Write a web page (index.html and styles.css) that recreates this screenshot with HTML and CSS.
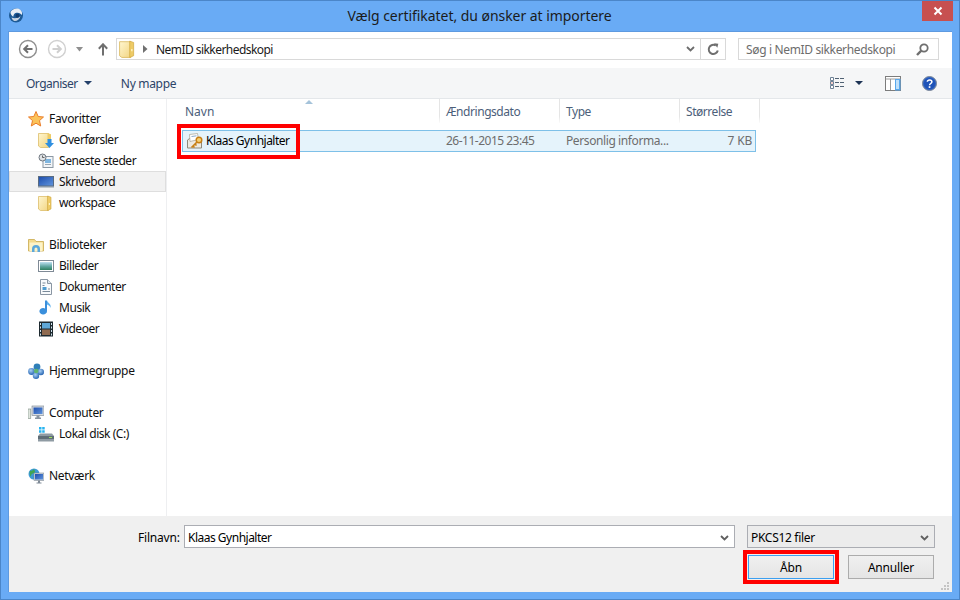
FILE: index.html
```html
<!DOCTYPE html>
<html lang="da">
<head>
<meta charset="utf-8">
<title>Vælg certifikatet</title>
<link rel="stylesheet" href="styles.css">
</head>
<body>
<svg class="sprite" width="0" height="0" aria-hidden="true">
  <defs>
    <linearGradient id="fold" x1="0" y1="0" x2="1" y2="1"><stop offset="0" stop-color="#fff6d0"/><stop offset="1" stop-color="#f2d583"/></linearGradient>
    <linearGradient id="screen" x1="0" y1="0" x2="1" y2="1"><stop offset="0" stop-color="#1f4fae"/><stop offset="1" stop-color="#5f93dc"/></linearGradient>
    <linearGradient id="land" x1="0" y1="0" x2="0" y2="1"><stop offset="0" stop-color="#bfe0f2"/><stop offset=".55" stop-color="#5fa6a0"/><stop offset="1" stop-color="#2f7f60"/></linearGradient>
    <radialGradient id="orb" cx=".4" cy=".35" r=".7"><stop offset="0" stop-color="#a9d0f5"/><stop offset="1" stop-color="#1f5fae"/></radialGradient>
    <symbol id="i-folder" viewBox="0 0 16 16">
      <path d="M0.500 1.500h10v14H2.500L0.500 14z" fill="url(#fold)" stroke="#d9b65a" stroke-width=".7"/>
      <path d="M9.500 1l3.500 1.200V14l-3.500 1.500z" fill="#eecb66" stroke="#cfa53c" stroke-width=".6"/>
      <rect x="10.800" y="8" width="1.200" height="2" fill="#fff3c4"/>
    </symbol>
    <symbol id="i-star" viewBox="0 0 16 16">
      <path d="M8 .5l2.200 5 5.300.5-4 3.600 1.200 5.400L8 12.200 3.300 15l1.200-5.400-4-3.600 5.300-.5z" fill="#fbc35a" stroke="#ea7d2a" stroke-width="1"/>
    </symbol>
    <symbol id="i-down" viewBox="0 0 16 16">
      <path d="M0.500 1.500h10v14H2.500L0.500 14z" fill="url(#fold)" stroke="#d9b65a" stroke-width=".7"/>
      <path d="M9.500 1l3.500 1.200V8H9.500z" fill="#eecb66"/>
      <path d="M9.500 7h4v4h2.500l-4.500 5-4.500-5h2.500z" fill="#2f8fe0"/>
    </symbol>
    <symbol id="i-recent" viewBox="0 0 16 16">
      <rect x="5" y="3.500" width="10" height="11" fill="#f2f5f8" stroke="#8c98a4"/>
      <rect x="7" y="6" width="6" height="4" fill="#7fb6e0"/>
      <rect x="7" y="11" width="6" height="1" fill="#9aa6b0"/>
      <circle cx="4.500" cy="4.500" r="3.500" fill="#dfe3e6" stroke="#6f7780"/>
      <path d="M4.500 2.500v2h2" fill="none" stroke="#444" stroke-width=".8"/>
    </symbol>
    <symbol id="i-desk" viewBox="0 0 16 16">
      <rect x="0" y="2" width="16" height="11" fill="#596b80"/>
      <rect x="1" y="3" width="14" height="8.500" fill="url(#screen)"/>
      <rect x="0" y="12" width="16" height="1.500" fill="#8a97a5"/>
    </symbol>
    <symbol id="i-lib" viewBox="0 0 16 16">
      <path d="M.5 14V2.500h6l1.500 2h7.500V14z" fill="#f5dc8e" stroke="#c9a94f" stroke-width=".8"/>
      <path d="M1.500 5.500h13V14h-13z" fill="#fdf3c8"/>
      <path d="M4 15v-3a4 4 0 0 1 8 0v3h-2.500v-3a1.500 1.500 0 0 0-3 0v3z" fill="#5ba8dc"/>
    </symbol>
    <symbol id="i-pic" viewBox="0 0 16 16">
      <rect x=".5" y="2.500" width="15" height="11" fill="#fff" stroke="#7f8a96"/>
      <rect x="2" y="4" width="12" height="8" fill="url(#land)"/>
    </symbol>
    <symbol id="i-doc" viewBox="0 0 16 16">
      <path d="M2.500.5h7l4 4v11h-11z" fill="#f8fafc" stroke="#8a96a3"/>
      <path d="M9.500.5v4h4" fill="#dbe5ee" stroke="#8a96a3"/>
      <path d="M4.500 4h3M4.500 6.500h2M10 10h2M4.500 12.500h7.500" stroke="#7a8a99"/>
      <rect x="4.500" y="8" width="4" height="3" fill="#4f9bd0"/>
    </symbol>
    <symbol id="i-music" viewBox="0 0 16 16">
      <path d="M9 .5v10.500a3.800 3.200 0 1 1-2-2.600V.5z" fill="#3a8fdc"/>
      <path d="M9 .5c1 3 4.500 3 3.500 7.500C12 5.500 10 5 9 4.500z" fill="#5fb0ec"/>
    </symbol>
    <symbol id="i-video" viewBox="0 0 16 16">
      <rect x="1" y=".5" width="14" height="15" fill="#1e2a30"/>
      <rect x="4" y="2" width="8" height="5.500" fill="#5fa8d8"/>
      <rect x="4" y="8.500" width="8" height="5.500" fill="#8f6a50"/>
      <path d="M2 2h1v2H2zM2 5.500h1v2H2zM2 9h1v2H2zM2 12.500h1v2H2zM13 2h1v2h-1zM13 5.500h1v2h-1zM13 9h1v2h-1zM13 12.500h1v2h-1z" fill="#cfe3ee"/>
    </symbol>
    <symbol id="i-home" viewBox="0 0 16 16">
      <circle cx="9" cy="3.800" r="3.400" fill="#2f7fb8"/>
      <circle cx="3.500" cy="8.500" r="3.400" fill="url(#orb)"/>
      <circle cx="12.800" cy="9" r="3.200" fill="url(#orb)"/>
      <circle cx="8" cy="12.800" r="3.200" fill="url(#orb)"/>
      <circle cx="8.200" cy="8" r="2.300" fill="#5fb46e"/>
    </symbol>
    <symbol id="i-comp" viewBox="0 0 16 16">
      <rect x="0" y="4" width="2.800" height="9.500" fill="#dfe5de" stroke="#7b8a80" stroke-width=".6"/>
      <rect x="4" y="1" width="12" height="9.500" fill="#d6dbe0" stroke="#75808c" stroke-width=".6"/>
      <rect x="5.500" y="2.500" width="9" height="6.500" fill="url(#screen)"/>
      <path d="M8.500 10.500h3v2h1.500v1.500H7V12.500h1.500z" fill="#8894a0"/>
    </symbol>
    <symbol id="i-disk" viewBox="0 0 16 16">
      <path d="M1 1h2.500v2.500H1zM4.200 1h2.500v2.500H4.200zM1 4.200h2.500v2.500H1zM4.200 4.200h2.500v2.500H4.200z" fill="#28b4f0"/>
      <path d="M0 10l2-2.500h12L16 10v5.500H0z" fill="#8f9ba3"/>
      <rect x="0" y="10" width="16" height="3" fill="#5f6d76"/>
      <rect x="11" y="11" width="3" height="1" fill="#9ce05a"/>
    </symbol>
    <symbol id="i-net" viewBox="0 0 16 16">
      <circle cx="6" cy="6" r="5.500" fill="#3d9ad6"/>
      <path d="M2 3c2 0 3-1 4-2 1 2 2 3 0 4S3 6 3 8 1 6 2 3z" fill="#3fa554"/>
      <rect x="6" y="5" width="10" height="7.500" fill="#cfd6dc" stroke="#6f7b87" stroke-width=".5"/>
      <rect x="7" y="6" width="8" height="5.500" fill="url(#screen)"/>
      <path d="M10 12.500h2v2h1.500v1h-5v-1H10z" fill="#7f8a96"/>
    </symbol>
  </defs>
</svg>

<div class="window">
  <header class="titlebar">
    <svg class="app-icon" width="16" height="16" viewBox="0 0 16 16" aria-hidden="true">
      <circle cx="8" cy="8.500" r="7" fill="#1d5a96"/>
      <path d="M2.500 5C4.500 1.500 9.500 .5 12.500 3c1.500 1.300 2 3.500 1.300 5-1-1.800-3.300-2.800-5.500-2.200C6.300 6.300 5.300 8 5.300 9.800 3.800 9 2.300 7 2.500 5z" fill="#e9eef5"/>
      <path d="M3.500 10.500c2.500 1 6 1 9-1.200-1 3-3.500 5-6 4.700-1.500-.2-2.500-1.700-3-3.500z" fill="#c9d4e2"/>
      <circle cx="9.500" cy="8.800" r="2" fill="#123a6b"/>
    </svg>
    <span class="title">Vælg certifikatet, du ønsker at importere</span>
    <button class="close" aria-label="Luk">
      <svg width="10" height="10" viewBox="0 0 10 10"><path d="M1.500 1.500l7 7M8.500 1.500l-7 7" stroke="#fff" stroke-width="2"/></svg>
    </button>
  </header>

  <div class="client">
    <div class="navbar">
      <div class="navbtns">
        <svg class="nav-circle" width="20" height="20" viewBox="0 0 20 20"><circle cx="10" cy="10" r="8.500" fill="#fff" stroke="#8f8f8f" stroke-width="1.400"/><path d="M14.500 10H6.500M10 6.300L6.200 10l3.800 3.700" fill="none" stroke="#6f6f6f" stroke-width="2"/></svg>
        <svg class="nav-circle fwd" width="20" height="20" viewBox="0 0 20 20"><circle cx="10" cy="10" r="8.500" fill="#fff" stroke="#d0d0d0" stroke-width="1.400"/><path d="M5.500 10h8M10 6.300L13.800 10 10 13.700" fill="none" stroke="#cfcfcf" stroke-width="2"/></svg>
        <svg class="nav-drop" width="8" height="5" viewBox="0 0 8 5"><path d="M0 0h7L3.500 4.500z" fill="#8f8f8f"/></svg>
        <svg class="nav-up" width="10" height="13" viewBox="0 0 10 13"><path d="M5 12.500V1.500M.8 5.800L5 1.300l4.200 4.500" fill="none" stroke="#6f6f6f" stroke-width="2"/></svg>
      </div>
      <div class="address">
        <svg class="addr-folder" width="18" height="18"><use href="#i-folder"/></svg>
        <svg class="addr-sep" width="5" height="8" viewBox="0 0 5 8"><path d="M0 0l4.500 4L0 8z" fill="#707070"/></svg>
        <span class="addr-text">NemID sikkerhedskopi</span>
        <svg class="chev" width="9" height="6" viewBox="0 0 9 6"><path d="M1 1l3.500 3.500L8 1" fill="none" stroke="#6d6d6d" stroke-width="1.800"/></svg>
        <span class="refresh">
          <svg width="13" height="13" viewBox="0 0 13 13"><path d="M10.800 7.500a4.600 4.600 0 1 1-2-5" fill="none" stroke="#6f6f6f" stroke-width="2"/><path d="M7 .2l4.300.6-1 4z" fill="#6f6f6f"/></svg>
        </span>
      </div>
      <div class="search">
        <span class="search-text">Søg i NemID sikkerhedskopi</span>
        <svg width="13" height="13" viewBox="0 0 13 13"><circle cx="8" cy="5" r="3.700" fill="none" stroke="#6f6f6f" stroke-width="1.800"/><path d="M5.300 7.700L1 12" stroke="#6f6f6f" stroke-width="2.400"/></svg>
      </div>
    </div>

    <div class="toolbar">
      <span class="tool organise">Organiser <svg class="caret" width="8" height="4" viewBox="0 0 8 4"><path d="M0 0h8L4 4z" fill="#24406a"/></svg></span>
      <span class="tool">Ny mappe</span>
      <span class="toolbar-right">
        <svg width="15" height="12" viewBox="0 0 15 12"><path d="M.5.500h3v3h-3zM.5 4.500h3v3h-3zM.5 8.500h3v3h-3z" fill="#fff" stroke="#6f8296"/><path d="M5 1.500h4M10 1.500h4M5 5.500h4M10 5.500h4M5 9.500h4M10 9.500h4" stroke="#4f6173"/><rect x="1.500" y="5.500" width="1" height="1" fill="#d43"/></svg>
        <svg class="view-caret" width="8" height="4" viewBox="0 0 8 4"><path d="M0 0h8L4 4z" fill="#1d3355"/></svg>
        <svg class="pane-ico" width="16" height="15" viewBox="0 0 16 15"><rect x=".5" y=".5" width="15" height="14" fill="#fff" stroke="#7c7c7c"/><path d="M.5 3h15M5.500 3v11" stroke="#9a9a9a"/><rect x="10" y="3" width="5.500" height="11.500" fill="#58a7ec"/><rect x="11" y="4" width="3" height="9" fill="#bfe0fa"/></svg>
        <svg class="help-ico" width="15" height="15" viewBox="0 0 15 15"><circle cx="7.500" cy="7.500" r="7" fill="#2d62c4" stroke="#7b8696"/><circle cx="7.500" cy="7.500" r="5.500" fill="#1f53b8"/><path d="M5.300 5.800c.2-2.500 4.600-2.500 4.600 0 0 1.700-2.300 1.700-2.300 3.400" fill="none" stroke="#fff" stroke-width="1.500"/><rect x="6.700" y="10.200" width="1.700" height="1.700" fill="#fff"/></svg>
      </span>
    </div>

    <div class="body">
      <nav class="sidebar">
        <div class="group">
          <div class="item top"><svg width="16" height="16"><use href="#i-star"/></svg>Favoritter</div>
          <div class="item"><svg width="16" height="16"><use href="#i-down"/></svg>Overførsler</div>
          <div class="item"><svg width="16" height="16"><use href="#i-recent"/></svg>Seneste steder</div>
          <div class="item active"><svg width="16" height="16"><use href="#i-desk"/></svg>Skrivebord</div>
          <div class="item"><svg width="16" height="16"><use href="#i-folder"/></svg>workspace</div>
        </div>
        <div class="group">
          <div class="item top"><svg width="16" height="16"><use href="#i-lib"/></svg>Biblioteker</div>
          <div class="item"><svg width="16" height="16"><use href="#i-pic"/></svg>Billeder</div>
          <div class="item"><svg width="16" height="16"><use href="#i-doc"/></svg>Dokumenter</div>
          <div class="item"><svg width="16" height="16"><use href="#i-music"/></svg>Musik</div>
          <div class="item"><svg width="16" height="16"><use href="#i-video"/></svg>Videoer</div>
        </div>
        <div class="group">
          <div class="item top"><svg width="16" height="16"><use href="#i-home"/></svg>Hjemmegruppe</div>
        </div>
        <div class="group">
          <div class="item top"><svg width="16" height="16"><use href="#i-comp"/></svg>Computer</div>
          <div class="item"><svg width="16" height="16"><use href="#i-disk"/></svg>Lokal disk (C:)</div>
        </div>
        <div class="group">
          <div class="item top"><svg width="16" height="16"><use href="#i-net"/></svg>Netværk</div>
        </div>
      </nav>

      <main class="files">
        <div class="cols head">
          <span class="col">Navn<svg class="sort" width="8" height="4" viewBox="0 0 8 4"><path d="M4 0l4 4H0z" fill="#a5c3da"/></svg></span>
          <span class="col">Ændringsdato</span>
          <span class="col">Type</span>
          <span class="col">Størrelse</span>
        </div>
        <div class="cols row">
          <span class="cell name">
            <svg width="16" height="16" viewBox="0 0 16 16"><path d="M.5 7l7-5 7 5v8H.5z" fill="#eeeae0" stroke="#8f8a7a"/><path d="M2.500 1.500l8-1 1 6-8.500 2z" fill="#fff" stroke="#a5a090" stroke-width=".7"/><path d="M4.500 3.500l5-.7" stroke="#8aa8c8"/><circle cx="12" cy="7" r="2.800" fill="#f7d070" stroke="#c77f14" stroke-width="1.400"/><path d="M10 9l-5.500 5.500M6 13l1.500 1.500M8 11l1.500 1.500" stroke="#c77f14" stroke-width="1.700"/></svg>
            Klaas Gynhjalter
          </span>
          <span class="cell date">26-11-2015 23:45</span>
          <span class="cell">Personlig informa...</span>
          <span class="cell size">7 KB</span>
        </div>
        <div class="mark mark-file"></div>
      </main>
    </div>

    <footer class="footer">
      <div class="line">
        <label class="fname-label">Filnavn:</label>
        <div class="combo fname"><span>Klaas Gynhjalter</span><svg width="9" height="6" viewBox="0 0 9 6"><path d="M1 1l3.500 3.500L8 1" fill="none" stroke="#5f5f5f" stroke-width="1.800"/></svg></div>
        <div class="combo ftype"><span>PKCS12 filer</span><svg width="9" height="6" viewBox="0 0 9 6"><path d="M1 1l3.500 3.500L8 1" fill="none" stroke="#5f5f5f" stroke-width="1.800"/></svg></div>
      </div>
      <div class="line buttons">
        <button class="btn primary">Åbn<span class="mark mark-btn"></span></button>
        <button class="btn">Annuller</button>
      </div>
      <svg class="grip" width="9" height="9" viewBox="0 0 9 9"><path d="M6 0h2v2H6zM3 3h2v2H3zM6 3h2v2H6zM0 6h2v2H0zM3 6h2v2H3zM6 6h2v2H6z" fill="#c4c4c4"/></svg>
    </footer>
  </div>
</div>
</body>
</html>
```
FILE: styles.css
```css
* { box-sizing: border-box; }
html, body { margin: 0; height: 100%; }
body {
  font-family: "Noto Sans", "Open Sans", sans-serif;
  font-size: 12px;
  color: #000;
  overflow: hidden;
}
svg { display: block; flex: none; }
.sprite { position: absolute; }

.window {
  width: 960px;
  height: 600px;
  background: #69abf5;
  border: 1px solid #4b86c9;
  display: flex;
  flex-direction: column;
  padding: 0 7px 7px;
}
.titlebar {
  height: 30px;
  flex: none;
  display: flex;
  position: relative;
  justify-content: center;
  padding-top: 5px;
}
.app-icon { position: absolute; left: 0; top: 6px; }
.title { font-size: 14px; line-height: 19px; color: #1b1b1b; letter-spacing: -.05px; margin-left: -1px; }
.close {
  position: absolute;
  right: -1px;
  top: 0;
  width: 31px;
  height: 20px;
  border: 0;
  padding: 0;
  background: #c75050;
  display: flex;
  align-items: center;
  justify-content: center;
}

.client {
  flex: 1;
  background: #fff;
  display: flex;
  flex-direction: column;
  border: 1px solid #5e9ae0;
  border-width: 1px 0 0 1px;
  min-height: 0;
}
.navbar {
  height: 36px;
  flex: none;
  display: flex;
  align-items: flex-start;
  padding: 6px 12px 0 0;
}
.navbtns { width: 107px; height: 22px; display: flex; align-items: center; padding-left: 9px; }
.fwd { margin-left: 9px; }
.nav-drop { margin-left: 9px; }
.nav-up { margin-left: 14px; }
.address {
  width: 610px;
  height: 22px;
  border: 1px solid #d9d9d9;
  display: flex;
  align-items: center;
  padding-left: 2px;
}
.addr-sep { margin-left: 6px; }
.addr-text { margin-left: 8px; flex: 1; color: #1a1a1a; letter-spacing: -.55px; }
.chev { margin-right: 5px; }
.refresh {
  width: 25px;
  height: 20px;
  border-left: 1px solid #d9d9d9;
  display: flex;
  align-items: center;
  justify-content: center;
}
.search {
  width: 201px;
  height: 22px;
  margin-left: 12px;
  border: 1px solid #d9d9d9;
  display: flex;
  align-items: center;
  justify-content: space-between;
  padding: 0 9px 0 7px;
  color: #6d6d6d;
  letter-spacing: -.35px;
}

.toolbar {
  height: 31px;
  flex: none;
  background: #f5f6f7;
  border-bottom: 1px solid #e4e7ea;
  display: flex;
  align-items: center;
  padding: 0 15px 0 17px;
  color: #2c4468;
}
.tool { display: flex; align-items: center; letter-spacing: -.3px; }
.organise { margin-right: 29px; letter-spacing: -.5px; }
.caret { margin-left: 6px; }
.toolbar-right { margin-left: auto; display: flex; align-items: center; }
.view-caret { margin-left: 10px; }
.pane-ico { margin-left: 22px; }
.help-ico { margin-left: 21px; }

.body { flex: 1; display: flex; min-height: 0; }
.sidebar {
  width: 158px;
  flex: none;
  border-right: 1px solid #eeeff1;
  padding-top: 9px;
  color: #111;
}
.group { margin-bottom: 21px; }
.item {
  height: 21px;
  display: flex;
  align-items: center;
  gap: 5px;
  padding-left: 29px;
  letter-spacing: -.45px;
}
.item.top { padding-left: 19px; letter-spacing: -.3px; }
.item.active {
  background: #f2f2f2;
  border: 1px solid #dedede;
  padding-left: 28px;
}
.files { flex: 1; position: relative; }
.cols {
  display: grid;
  grid-template-columns: 258px 120px 120px 80px;
  margin-left: 15px;
}
.head { height: 24px; color: #4c607a; letter-spacing: -.45px; }
.col {
  position: relative;
  padding: 4px 0 0 6px;
  border-right: 1px solid #e5e5e5;
  border-image: linear-gradient(#e5e5e5 70%, #fff) 1;
}
.col:first-child { padding-left: 3px; letter-spacing: 0; }
.sort { position: absolute; left: 123px; top: 1px; }
.row {
  width: 574px;
  height: 22px;
  margin-top: 7px;
  background: #e5f3fb;
  border: 1px solid #7ec0e8;
  color: #6d6d6d;
  grid-template-columns: 257px 120px 120px 75px;
  letter-spacing: -.4px;
}
.cell { padding-left: 6px; line-height: 20px; }
.date { letter-spacing: -.5px; }
.name { display: flex; align-items: center; gap: 3px; padding-left: 4px; color: #000; letter-spacing: -.5px; }
.size { text-align: right; padding-right: 3px; letter-spacing: -.2px; }

.mark { position: absolute; border: 4px solid #f00; pointer-events: none; }
.mark-file { left: 10px; top: 25px; width: 123px; height: 35px; }
.mark-btn { left: -6px; top: -6px; width: 96px; height: 34px; }

.footer {
  height: 76px;
  flex: none;
  background: #f0f0f0;
  position: relative;
  padding-top: 9px;
}
.line { display: flex; align-items: center; }
.fname-label { margin-left: 129px; width: 46px; letter-spacing: -.2px; padding-top: 1px; }
.combo {
  height: 23px;
  border: 1px solid #abadb3;
  display: flex;
  align-items: center;
  justify-content: space-between;
  padding: 2px 5px 0 3px;
  letter-spacing: -.3px;
}
.fname { width: 551px; background: #fff; letter-spacing: -.5px; }
.ftype { width: 188px; margin-left: 12px; background: #ececec; }
.buttons { margin-top: 7px; padding-left: 739px; gap: 14px; }
.btn {
  position: relative;
  width: 86px;
  height: 24px;
  padding: 0;
  font: inherit;
  letter-spacing: -.2px;
  color: #000;
  border: 1px solid #acacac;
  background: linear-gradient(#f0f0f0, #e5e5e5);
}
.primary { border-color: #3c9ff0; }
.grip { position: absolute; right: 2px; bottom: 1px; }
```
